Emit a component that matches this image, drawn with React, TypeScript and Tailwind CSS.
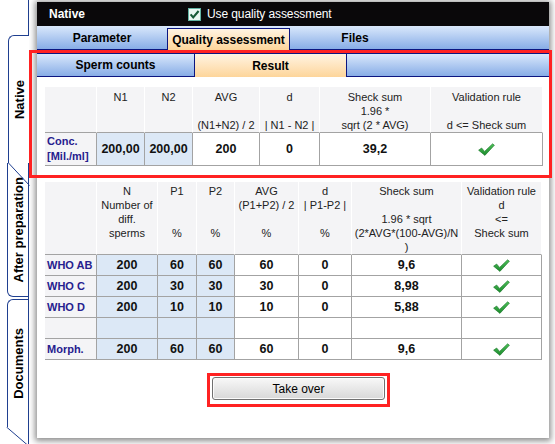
import React from "react";

const Check = () => (
  <svg width="17" height="13" viewBox="0 0 17 13">
    <defs>
      <linearGradient id="gchk" x1="0" y1="0" x2="0" y2="1">
        <stop offset="0" stopColor="#4fc25a" />
        <stop offset="1" stopColor="#1b8a2c" />
      </linearGradient>
    </defs>
    <path
      d="M0.6 7.2 L3.6 5 L6.6 8.4 L14.6 0.8 L16.4 2.2 L6.9 12.4 Z"
      fill="url(#gchk)"
      stroke="#1a7328"
      strokeWidth="0.6"
      strokeLinejoin="round"
    />
  </svg>
);

const HeaderCheckbox = () => (
  <svg width="13" height="13" viewBox="0 0 13 13">
    <rect x="0.5" y="0.5" width="12" height="12" fill="#eaf7f1" stroke="#62b3a4" />
    <path d="M2.6 6.4 L5.2 9.4 L10.6 3.0" stroke="#175a36" strokeWidth="2.1" fill="none" />
  </svg>
);

type H = string[];

function HeadCell({ lines, pt }: { lines: H; pt: string }) {
  return (
    <div className={`flex flex-col items-center bg-[#f4f4f6] border-r border-r-white border-b border-b-[#a3a3a3] text-[11px] leading-[14px] text-[#222] ${pt}`}>
      {lines.map((l, i) => (
        <span key={i} className="whitespace-nowrap">
          {l === "" ? "\u00a0" : l}
        </span>
      ))}
    </div>
  );
}

type Cell = { v: React.ReactNode; blue?: boolean; label?: boolean };

function DataCell({ c, h }: { c: Cell; h: string }) {
  if (c.label) {
    return (
      <div className={`flex items-center pl-[2px] bg-[#f4f4f6] border-r border-b border-[#a3a3a3] text-[11px] leading-[15px] font-bold text-[#26208e] ${h}`}>
        {c.v}
      </div>
    );
  }
  return (
    <div
      className={`flex items-center justify-center border-r border-b border-[#a3a3a3] text-[12.5px] font-bold text-[#111] ${h} ${
        c.blue ? "bg-[#dce8f6]" : "bg-white"
      }`}
    >
      {c.v}
    </div>
  );
}

const t1Head: H[] = [
  [],
  ["N1", "", ""],
  ["N2", "", ""],
  ["AVG", "", "(N1+N2) / 2"],
  ["d", "", "| N1 - N2 |"],
  ["Sheck sum", "1.96 *", "sqrt (2 * AVG)"],
  ["Validation rule", "", "d <= Sheck sum"],
];

const t2Head: H[] = [
  [],
  ["N", "Number of", "diff.", "sperms"],
  ["P1", "", "", "%"],
  ["P2", "", "", "%"],
  ["AVG", "(P1+P2) / 2", "", "%"],
  ["d", "| P1-P2 |", "", "%"],
  ["Sheck sum", "", "1.96 * sqrt", "(2*AVG*(100-AVG)/N", ")"],
  ["Validation rule", "d", "<=", "Sheck sum"],
];

type Row2 = { label: string; vals: string[]; check: boolean };
const t2Rows: Row2[] = [
  { label: "WHO AB", vals: ["200", "60", "60", "60", "0", "9,6"], check: true },
  { label: "WHO C", vals: ["200", "30", "30", "30", "0", "8,98"], check: true },
  { label: "WHO D", vals: ["200", "10", "10", "10", "0", "5,88"], check: true },
  { label: "", vals: ["", "", "", "", "", ""], check: false },
  { label: "Morph.", vals: ["200", "60", "60", "60", "0", "9,6"], check: true },
];

const TabLine = "border-[#1f3f90]";

export default function App() {
  return (
    <div className="relative w-[555px] h-[444px] bg-white overflow-hidden flex font-['Liberation_Sans',Arial,sans-serif] text-black">
      {/* Left vertical tabs */}
      <div className="w-[29px] shrink-0 flex flex-col">
        <div className={`h-[35px] border-r ${TabLine}`} />
        <div className={`relative h-[128px] ml-[8px] border-l border-t ${TabLine} rounded-tl-[6px] flex items-center justify-center bg-white`}>
          <span className="[writing-mode:vertical-rl] rotate-180 font-bold text-[13px] leading-none">Native</span>
          <svg className="absolute left-[-1px] top-full z-10" width="22" height="23" viewBox="0 0 22 23">
            <line x1="0.5" y1="0" x2="21.5" y2="22.5" stroke="#1f3f90" strokeWidth="1" />
          </svg>
        </div>
        <div className={`h-[134px] ml-[7px] border-l border-r border-b ${TabLine} rounded-bl-[6px] flex items-center justify-center`}>
          <span className="[writing-mode:vertical-rl] rotate-180 font-bold text-[13px] leading-none whitespace-nowrap">After preparation</span>
        </div>
        <div className={`h-[2px] border-r ${TabLine}`} />
        <div className={`flex-1 ml-[7px] border-r ${TabLine} flex flex-col`}>
          <div className={`h-[128px] border-l border-t ${TabLine} rounded-tl-[6px] flex items-center justify-center`}>
            <span className="[writing-mode:vertical-rl] rotate-180 font-bold text-[13px] leading-none">Documents</span>
          </div>
          <div className="relative flex-1">
            <svg className="absolute left-[-1px] top-0" width="22" height="18" viewBox="0 0 22 18">
              <line x1="0.5" y1="0" x2="21.5" y2="18" stroke="#1f3f90" strokeWidth="1" />
            </svg>
          </div>
        </div>
      </div>

      {/* Main panel */}
      <div className="ml-[8px] mt-[2px] w-[512px] h-[436px] bg-white flex flex-col shadow-[0_1px_6px_2px_rgba(0,0,0,0.45)]">
        {/* Black header */}
        <div className="h-[24px] bg-[#0a080a] flex items-center text-white">
          <div className="w-[151px] pl-[12px] font-bold text-[12px]">Native</div>
          <HeaderCheckbox />
          <span className="ml-[6px] text-[12px] tracking-[-0.1px]">Use quality assessment</span>
        </div>

        {/* Main tabs */}
        <div className="h-[24px] flex bg-linear-to-b from-[#dae8fb] to-[#88ade6] border-b border-[#0c1680] text-[12px] font-bold">
          <div className="w-[130px] flex items-center justify-center">Parameter</div>
          <div className="w-[123px] mt-[2px] mb-[-1px] border border-b-0 border-[#0c1680] bg-linear-to-b from-[#fff4e2] to-[#fdd59a] flex items-center justify-center">
            Quality assessment
          </div>
          <div className="w-[130px] flex items-center justify-center">Files</div>
          <div className="flex-1" />
        </div>

        {/* Sub tabs */}
        <div className="mt-[3px] h-[24px] flex border-t border-[#0c1680] text-[12px] font-bold">
          <div className="w-[158px] border-r border-b border-[#0c1680] bg-linear-to-b from-[#dae8fb] to-[#88ade6] flex items-center justify-center">
            Sperm counts
          </div>
          <div className="w-[152px] border-r border-[#0c1680] bg-linear-to-b from-[#fff4e2] to-[#fdd59a] flex items-center justify-center">
            Result
          </div>
          <div className="flex-1 border-b border-[#0c1680] bg-linear-to-b from-[#dae8fb] to-[#88ade6]" />
        </div>

        {/* Table 1 */}
        <div className="ml-[8px] mt-[10px] w-[498px] grid grid-cols-[52px_48px_48px_67px_60px_111px_112px]">
          {t1Head.map((l, i) => (
            <div key={i} className="h-[46px] grid">
              <HeadCell lines={l} pt="pt-[3px]" />
            </div>
          ))}
          <DataCell
            h="h-[33px]"
            c={{
              label: true,
              v: (
                <span>
                  Conc.
                  <br />
                  [Mil./ml]
                </span>
              ),
            }}
          />
          <DataCell h="h-[33px]" c={{ v: "200,00", blue: true }} />
          <DataCell h="h-[33px]" c={{ v: "200,00", blue: true }} />
          <DataCell h="h-[33px]" c={{ v: "200" }} />
          <DataCell h="h-[33px]" c={{ v: "0" }} />
          <DataCell h="h-[33px]" c={{ v: "39,2" }} />
          <DataCell h="h-[33px]" c={{ v: <Check /> }} />
        </div>

        {/* Table 2 */}
        <div className="ml-[8px] mt-[16px] w-[497px] grid grid-cols-[52px_61px_39px_38px_64px_53px_110px_80px]">
          {t2Head.map((l, i) => (
            <div key={i} className="h-[73px] grid">
              <HeadCell lines={l} pt="pt-[2px]" />
            </div>
          ))}
          {t2Rows.map((r, ri) => (
            <React.Fragment key={ri}>
              <DataCell h="h-[21px]" c={{ label: true, v: r.label }} />
              {r.vals.map((v, vi) => (
                <DataCell key={vi} h="h-[21px]" c={{ v, blue: vi < 3 }} />
              ))}
              <DataCell h="h-[21px]" c={{ v: r.check ? <Check /> : "" }} />
            </React.Fragment>
          ))}
        </div>

        {/* Button */}
        <button className="ml-[175px] mt-[17px] w-[173px] h-[23px] rounded-[3px] border border-[#707070] bg-linear-to-b from-[#f8f8f8] to-[#d8d8d8] text-[12px] text-black shadow-[inset_0_0_0_1px_#fbfbfb]">
          Take over
        </button>
      </div>

      {/* Red annotation frames */}
      <div className="absolute left-[29px] top-[50px] w-[523px] h-[128px] border-[3px] border-[#ff2222] pointer-events-none" />
      <div className="absolute left-[207px] top-[373px] w-[183px] h-[34px] border-[3px] border-[#ff2222] pointer-events-none" />
    </div>
  );
}
